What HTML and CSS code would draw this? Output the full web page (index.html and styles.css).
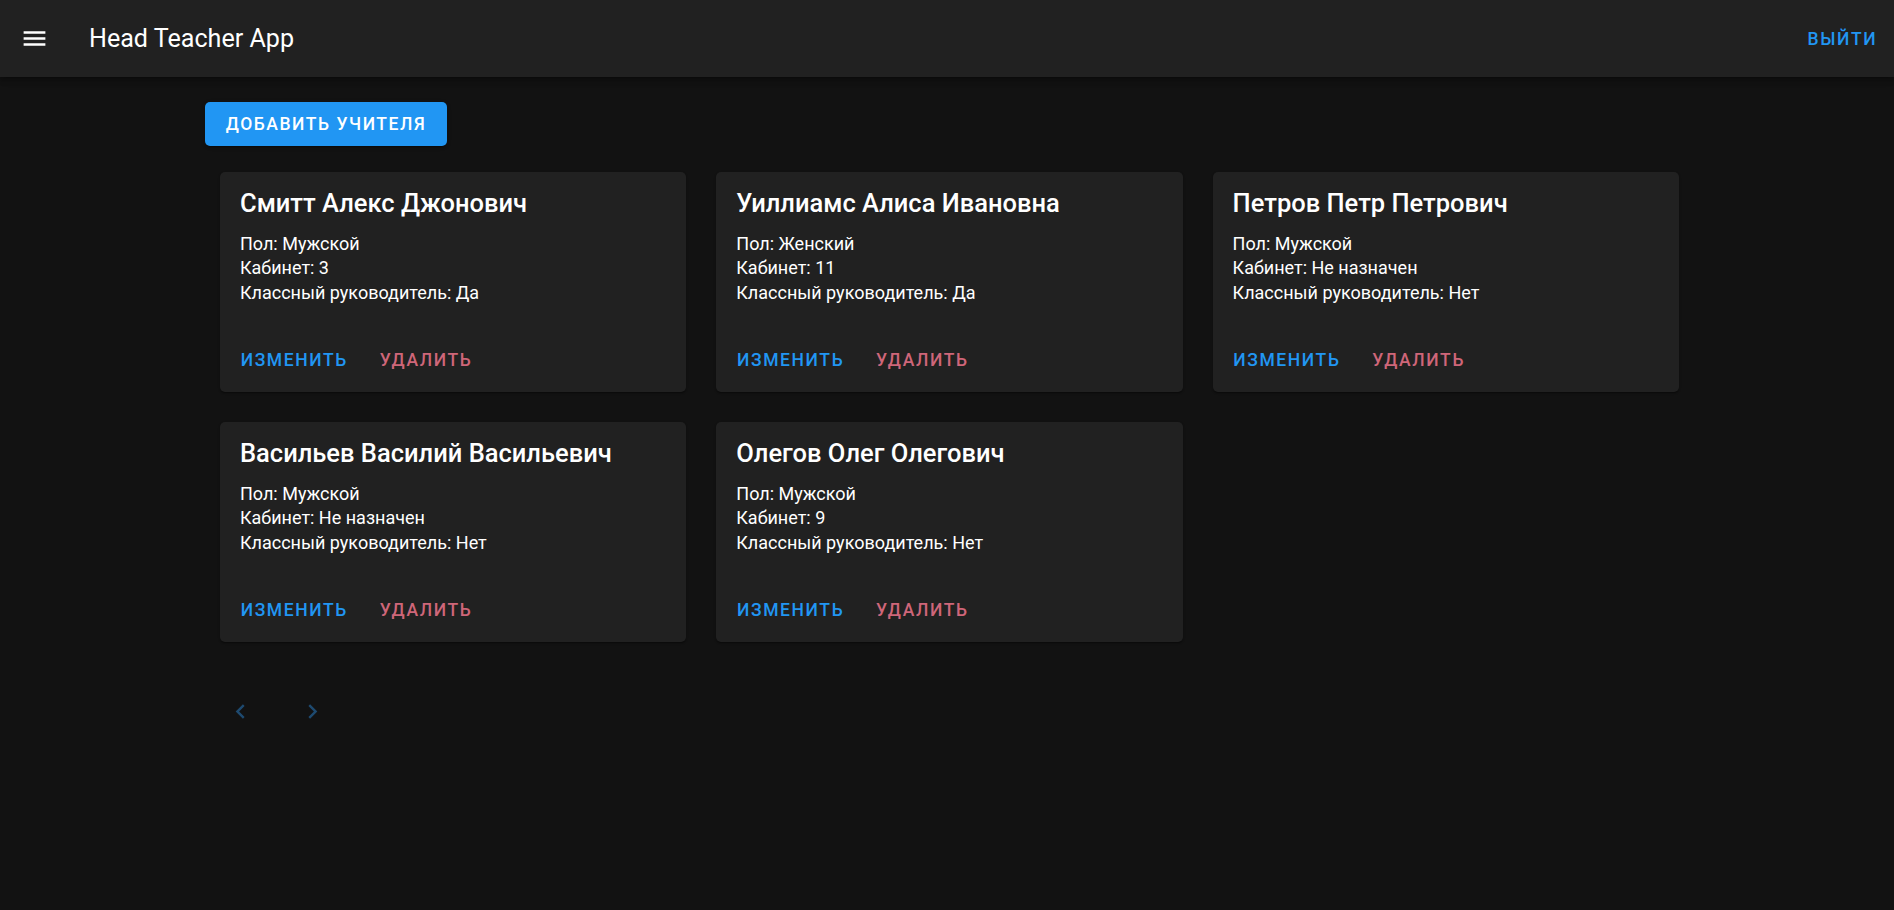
FILE: index.html
```html
<!DOCTYPE html>
<html lang="ru">
<head>
<meta charset="utf-8">
<title>Head Teacher App</title>
<link rel="stylesheet" href="styles.css">
</head>
<body>
<header class="app-bar">
  <button class="icon-btn menu-btn" aria-label="menu">
    <svg viewBox="0 0 24 24" width="29" height="29"><path fill="#fff" d="M3,6H21V8H3V6M3,11H21V13H3V11M3,16H21V18H3V16Z"/></svg>
  </button>
  <div class="app-title">Head Teacher App</div>
  <div class="spacer"></div>
  <button class="text-btn primary logout">Выйти</button>
</header>
<main class="main">
  <button class="add-btn">Добавить учителя</button>
  <section class="grid">
    <article class="card">
      <h2 class="card-title">Смитт Алекс Джонович</h2>
      <div class="card-text">
        <div>Пол: Мужской</div>
        <div>Кабинет: 3</div>
        <div>Классный руководитель: Да</div>
      </div>
      <div class="card-actions">
        <button class="text-btn primary">Изменить</button>
        <button class="text-btn danger">Удалить</button>
      </div>
    </article>
    <article class="card">
      <h2 class="card-title">Уиллиамс Алиса Ивановна</h2>
      <div class="card-text">
        <div>Пол: Женский</div>
        <div>Кабинет: 11</div>
        <div>Классный руководитель: Да</div>
      </div>
      <div class="card-actions">
        <button class="text-btn primary">Изменить</button>
        <button class="text-btn danger">Удалить</button>
      </div>
    </article>
    <article class="card">
      <h2 class="card-title">Петров Петр Петрович</h2>
      <div class="card-text">
        <div>Пол: Мужской</div>
        <div>Кабинет: Не назначен</div>
        <div>Классный руководитель: Нет</div>
      </div>
      <div class="card-actions">
        <button class="text-btn primary">Изменить</button>
        <button class="text-btn danger">Удалить</button>
      </div>
    </article>
    <article class="card">
      <h2 class="card-title">Васильев Василий Васильевич</h2>
      <div class="card-text">
        <div>Пол: Мужской</div>
        <div>Кабинет: Не назначен</div>
        <div>Классный руководитель: Нет</div>
      </div>
      <div class="card-actions">
        <button class="text-btn primary">Изменить</button>
        <button class="text-btn danger">Удалить</button>
      </div>
    </article>
    <article class="card">
      <h2 class="card-title">Олегов Олег Олегович</h2>
      <div class="card-text">
        <div>Пол: Мужской</div>
        <div>Кабинет: 9</div>
        <div>Классный руководитель: Нет</div>
      </div>
      <div class="card-actions">
        <button class="text-btn primary">Изменить</button>
        <button class="text-btn danger">Удалить</button>
      </div>
    </article>
  </section>
  <nav class="pagination">
    <button class="page-btn" aria-label="prev">
      <svg viewBox="0 0 24 24" width="29" height="29"><path fill="currentColor" d="M15.41,16.58L10.83,12L15.41,7.41L14,6L8,12L14,18L15.41,16.58Z"/></svg>
    </button>
    <button class="page-btn" aria-label="next">
      <svg viewBox="0 0 24 24" width="29" height="29"><path fill="currentColor" d="M8.59,16.58L13.17,12L8.59,7.41L10,6L16,12L10,18L8.59,16.58Z"/></svg>
    </button>
  </nav>
</main>
</body>
</html>
```

FILE: styles.css
```css
* { box-sizing: border-box; }

html, body {
  margin: 0;
  padding: 0;
}

body {
  background: #121212;
  color: #fff;
  font-family: Roboto, "Liberation Sans", Arial, sans-serif;
  min-height: 910px;
}

button {
  font-family: inherit;
  border: none;
  background: none;
  cursor: pointer;
  padding: 0;
  margin: 0;
  color: inherit;
}

.app-bar {
  height: 77px;
  background: #212121;
  display: flex;
  align-items: center;
  padding: 0 6px 0 20px;
  box-shadow: 0 2px 4px -1px rgba(0,0,0,0.2), 0 4px 5px 0 rgba(0,0,0,0.14), 0 1px 10px 0 rgba(0,0,0,0.12);
  position: relative;
  z-index: 2;
}

.icon-btn {
  width: 29px;
  height: 29px;
  display: flex;
  align-items: center;
  justify-content: center;
}

.app-title {
  margin-left: 40px;
  font-size: 25.1px;
  font-weight: 400;
  letter-spacing: 0;
  color: #fff;
}

.spacer { flex: 1; }

.text-btn {
  height: 43px;
  padding: 0 10.8px;
  font-size: 17.5px;
  font-weight: 500;
  letter-spacing: 1.6px;
  text-transform: uppercase;
  border-radius: 5px;
}

.primary { color: #2196f3; }
.danger { color: #cf6679; }

.main {
  padding: 25px 0 40px 205px;
}

.add-btn {
  display: block;
  height: 44px;
  width: 242px;
  background: #2196f3;
  color: #fff;
  font-size: 17.5px;
  font-weight: 500;
  letter-spacing: 1.55px;
  text-transform: uppercase;
  border-radius: 5px;
  box-shadow: 0 3px 1px -2px rgba(0,0,0,0.2), 0 2px 2px 0 rgba(0,0,0,0.14), 0 1px 5px 0 rgba(0,0,0,0.12);
}

.grid {
  margin: 26px 0 0 15px;
  display: grid;
  grid-template-columns: repeat(3, 466.3px);
  column-gap: 30px;
  row-gap: 30px;
}

.card {
  background: #212121;
  border-radius: 5px;
  height: 220px;
  display: flex;
  flex-direction: column;
  box-shadow: 0 2px 1px -1px rgba(0,0,0,0.2), 0 1px 1px 0 rgba(0,0,0,0.14), 0 1px 3px 0 rgba(0,0,0,0.12);
}

.card-title {
  margin: 0;
  padding: 15px 20px 0;
  font-size: 25.5px;
  line-height: 32px;
  font-weight: 500;
  color: #fff;
}

.card-text {
  padding: 13px 20px 0;
  font-size: 18px;
  line-height: 24.3px;
  color: #fff;
}

.card-actions {
  margin-top: auto;
  padding: 9.6px 9.6px 10.6px 9.9px;
  display: flex;
  gap: 10.1px;
}

.pagination {
  margin: 45px 0 0 11px;
  display: flex;
  gap: 24px;
}

.page-btn {
  width: 48px;
  height: 48px;
  display: flex;
  align-items: center;
  justify-content: center;
  color: #1e4a70;
}
```
